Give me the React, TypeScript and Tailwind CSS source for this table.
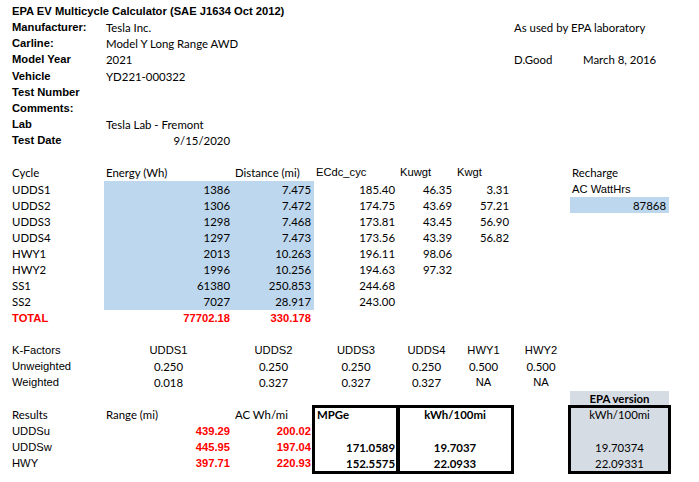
import React from 'react';

// column widths follow the sheet's gridlines (A..H)
const cols = 'grid grid-cols-[94px_129px_81px_84px_57px_57px_58px_99px]';
const arial = "font-['Liberation_Sans',Arial,sans-serif] text-[11.2px]";
const calibri = "font-['Lato','Open_Sans',sans-serif] text-[11.4px]";

type CellProps = {
    children?: React.ReactNode;
    a?: 'l' | 'r' | 'c';
    f?: 'a' | 'c';
    bold?: boolean;
    red?: boolean;
    fill?: 'blue' | 'grey';
    span?: 2 | 8;
    className?: string;
};

const Cell: React.FC<CellProps> = ({ children, a = 'l', f = 'c', bold, red, fill, span, className }) => {
    const align = a === 'r' ? 'justify-end pr-[3px]' : a === 'c' ? 'justify-center' : 'justify-start pl-[2px]';
    return (
        <div
            className={[
                'flex items-center whitespace-nowrap leading-none',
                align,
                f === 'a' ? arial : calibri,
                bold ? 'font-bold' : '',
                red ? 'text-[#ff0000]' : 'text-black',
                fill === 'blue' ? 'bg-[#bdd7ee]' : fill === 'grey' ? 'bg-[#d6dce4]' : '',
                span === 2 ? 'col-span-2' : span === 8 ? 'col-span-8' : '',
                className || '',
            ].join(' ')}
        >
            {children}
        </div>
    );
};

const Row: React.FC<{ children?: React.ReactNode }> = ({ children }) => (
    <div className={`${cols} h-[16.15px]`}>{children}</div>
);

const info: [string, string][] = [
    ['Manufacturer:', 'Tesla Inc.'],
    ['Carline:', 'Model Y Long Range AWD'],
    ['Model Year', '2021'],
    ['Vehicle', 'YD221-000322'],
    ['Test Number', ''],
    ['Comments:', ''],
    ['Lab', 'Tesla Lab - Fremont'],
];

const cycles = [
    { name: 'UDDS1', wh: '1386', mi: '7.475', ec: '185.40', ku: '46.35', kw: '3.31' },
    { name: 'UDDS2', wh: '1306', mi: '7.472', ec: '174.75', ku: '43.69', kw: '57.21' },
    { name: 'UDDS3', wh: '1298', mi: '7.468', ec: '173.81', ku: '43.45', kw: '56.90' },
    { name: 'UDDS4', wh: '1297', mi: '7.473', ec: '173.56', ku: '43.39', kw: '56.82' },
    { name: 'HWY1', wh: '2013', mi: '10.263', ec: '196.11', ku: '98.06', kw: '' },
    { name: 'HWY2', wh: '1996', mi: '10.256', ec: '194.63', ku: '97.32', kw: '' },
    { name: 'SS1', wh: '61380', mi: '250.853', ec: '244.68', ku: '', kw: '' },
    { name: 'SS2', wh: '7027', mi: '28.917', ec: '243.00', ku: '', kw: '' },
];

const kNames = ['UDDS1', 'UDDS2', 'UDDS3', 'UDDS4', 'HWY1', 'HWY2'];
const kUnw = ['0.250', '0.250', '0.250', '0.250', '0.500', '0.500'];
const kW = ['0.018', '0.327', '0.327', '0.327', 'NA', 'NA'];

const results = [
    { name: 'UDDSu', range: '439.29', wh: '200.02', mpge: '', kwh: '', epa: '' },
    { name: 'UDDSw', range: '445.95', wh: '197.04', mpge: '171.0589', kwh: '19.7037', epa: '19.70374' },
    { name: 'HWY', range: '397.71', wh: '220.93', mpge: '152.5575', kwh: '22.0933', epa: '22.09331' },
];

const boxRow = 'h-[16.15px] flex items-center whitespace-nowrap leading-none';

export default function App() {
    return (
        <div className="w-[699px] h-[482px] bg-white pl-[10px] pt-[3.6px] overflow-hidden">
            <Row>
                <Cell f="a" bold span={8}>EPA EV Multicycle Calculator (SAE J1634 Oct 2012)</Cell>
            </Row>
            {info.map(([label, value], i) => (
                <Row key={label}>
                    <Cell f="a" bold>{label}</Cell>
                    <Cell span={2}>{value}</Cell>
                    <div />
                    <div />
                    <div />
                    {i === 0 && <Cell span={2}>As used by EPA laboratory</Cell>}
                    {i === 2 && (
                        <>
                            <Cell>D.Good</Cell>
                            <Cell className="pl-[13px]">March 8, 2016</Cell>
                        </>
                    )}
                </Row>
            ))}
            <Row>
                <Cell f="a" bold>Test Date</Cell>
                <Cell a="r">9/15/2020</Cell>
            </Row>
            <Row />

            {/* cycle table */}
            <Row>
                <Cell>Cycle</Cell>
                <Cell>Energy (Wh)</Cell>
                <Cell>Distance (mi)</Cell>
                <Cell f="a">ECdc_cyc</Cell>
                <Cell f="a">Kuwgt</Cell>
                <Cell f="a">Kwgt</Cell>
                <div />
                <Cell>Recharge</Cell>
            </Row>
            {cycles.map((c, i) => (
                <Row key={c.name}>
                    <Cell>{c.name}</Cell>
                    <Cell a="r" fill="blue">{c.wh}</Cell>
                    <Cell a="r" fill="blue">{c.mi}</Cell>
                    <Cell a="r">{c.ec}</Cell>
                    <Cell a="r">{c.ku}</Cell>
                    <Cell a="r">{c.kw}</Cell>
                    <div />
                    {i === 0 && <Cell f="a">AC WattHrs</Cell>}
                    {i === 1 && <Cell a="r" fill="blue">87868</Cell>}
                </Row>
            ))}
            <Row>
                <Cell f="a" bold red>TOTAL</Cell>
                <Cell f="a" bold red a="r">77702.18</Cell>
                <Cell f="a" bold red a="r">330.178</Cell>
            </Row>
            <Row />

            {/* K-factors */}
            <Row>
                <Cell f="a">K-Factors</Cell>
                {kNames.map((k) => (
                    <Cell key={k} f="a" a="c">{k}</Cell>
                ))}
            </Row>
            <Row>
                <Cell f="a">Unweighted</Cell>
                {kUnw.map((k, i) => (
                    <Cell key={i} a="c">{k}</Cell>
                ))}
            </Row>
            <Row>
                <Cell f="a">Weighted</Cell>
                {kW.map((k, i) => (
                    <Cell key={i} a="c" f={k === 'NA' ? 'a' : 'c'}>{k}</Cell>
                ))}
            </Row>

            {/* results + boxes */}
            <div className={`${cols} grid-rows-[repeat(5,16.15px)]`}>
                <Cell a="c" bold fill="grey" className="col-start-8 row-start-1">EPA version</Cell>

                <Cell className="col-start-1 row-start-2">Results</Cell>
                <Cell className="col-start-2 row-start-2">Range (mi)</Cell>
                <Cell className="col-start-3 row-start-2">AC Wh/mi</Cell>
                {results.map((r, i) => (
                    <React.Fragment key={r.name}>
                        <Cell f="a" className={['col-start-1', i === 0 ? 'row-start-3' : i === 1 ? 'row-start-4' : 'row-start-5'].join(' ')}>{r.name}</Cell>
                        <Cell f="a" bold red a="r" className={['col-start-2', i === 0 ? 'row-start-3' : i === 1 ? 'row-start-4' : 'row-start-5'].join(' ')}>{r.range}</Cell>
                        <Cell f="a" bold red a="r" className={['col-start-3', i === 0 ? 'row-start-3' : i === 1 ? 'row-start-4' : 'row-start-5'].join(' ')}>{r.wh}</Cell>
                    </React.Fragment>
                ))}

                <div className={`col-start-4 row-start-2 row-span-4 flex flex-col outline-3 outline-black -outline-offset-[1.5px] ${calibri} font-bold`}>
                    <div className={`${boxRow} pl-[3px]`}>MPGe</div>
                    {results.map((r) => (
                        <div key={r.name} className={`${boxRow} justify-end pr-[3px]`}>{r.mpge}</div>
                    ))}
                </div>
                <div className={`col-start-5 col-span-2 row-start-2 row-span-4 flex flex-col outline-3 outline-black -outline-offset-[1.5px] ${calibri} font-bold`}>
                    <div className={`${boxRow} justify-center`}>kWh/100mi</div>
                    {results.map((r) => (
                        <div key={r.name} className={`${boxRow} justify-center`}>{r.kwh}</div>
                    ))}
                </div>
                <div className={`col-start-8 row-start-2 row-span-4 flex flex-col bg-[#d6dce4] outline-3 outline-black -outline-offset-[1.5px] ${calibri}`}>
                    <div className={`${boxRow} justify-center`}>kWh/100mi</div>
                    {results.map((r) => (
                        <div key={r.name} className={`${boxRow} justify-center`}>{r.epa}</div>
                    ))}
                </div>
            </div>
        </div>
    );
}
